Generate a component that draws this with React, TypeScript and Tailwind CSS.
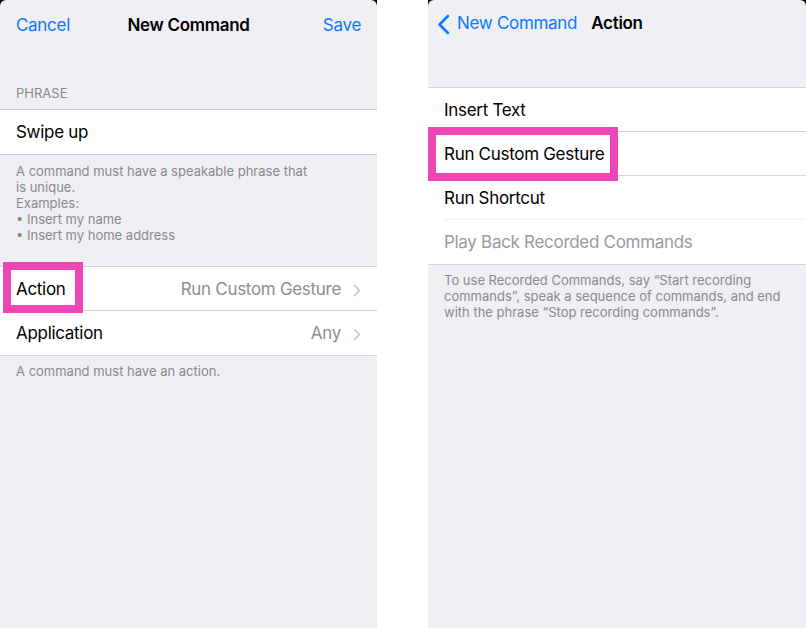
import type { ReactNode } from "react";

const font = { fontFamily: "Inter, 'Noto Sans', sans-serif" };

function Chevron() {
  return (
    <svg width="8" height="13" viewBox="0 0 8 13" className="ml-[12px] shrink-0">
      <path d="M1.5 1.5 L6.5 6.5 L1.5 11.5" fill="none" stroke="#c4c4c8" strokeWidth="1.6" strokeLinecap="round" strokeLinejoin="round" />
    </svg>
  );
}

function BackChevron() {
  return (
    <svg width="13" height="21" viewBox="0 0 13 21" className="shrink-0">
      <path d="M11 2 L2.5 10.5 L11 19" fill="none" stroke="#0a7aff" strokeWidth="2.6" strokeLinecap="round" strokeLinejoin="round" />
    </svg>
  );
}

function Row({
  children,
  value,
  chevron,
  border = "inset",
  muted,
}: {
  children: ReactNode;
  value?: string;
  chevron?: boolean;
  border?: "inset" | "faint" | "none";
  muted?: boolean;
}) {
  return (
    <div className="relative flex h-[44px] items-center bg-white px-4 pt-[2px]">
      <span className={`text-[17px] ${muted ? "text-[#9a9a9e]" : "text-black"}`}>{children}</span>
      <div className="flex-1" />
      {value && <span className="text-[17px] text-[#8e8e93]">{value}</span>}
      {chevron && <Chevron />}
      {border === "inset" && <div className="absolute bottom-0 left-4 right-0 h-px bg-[#d1d1d6]" />}
      {border === "faint" && <div className="absolute bottom-0 left-4 right-0 h-px bg-[#ededf0]" />}
    </div>
  );
}

function Footnote({ children, className = "" }: { children: ReactNode; className?: string }) {
  return <div className={`px-4 text-[13px] leading-[16px] tracking-[0px] text-[#8a8a8e] ${className}`}>{children}</div>;
}

function Panel({ children }: { children: ReactNode }) {
  return (
    <div className="h-full bg-black">
      <div className="h-full rounded-t-[6px] bg-[#efeff4]">{children}</div>
    </div>
  );
}

function NewCommand() {
  return (
    <Panel>
      <div className="relative flex h-[50px] items-center justify-between px-4 pt-[2px] text-[17px]">
        <span className="text-[#0a7aff]">Cancel</span>
        <span className="absolute left-0 right-0 text-center font-semibold text-black">New Command</span>
        <span className="text-[#0a7aff]">Save</span>
      </div>
      <div className="flex h-[59px] items-end px-4 pb-[6px] text-[13px] tracking-[0px] text-[#8a8a8e]">PHRASE</div>
      <div className="border-y border-[#d1d1d6]">
        <Row border="none">Swipe up</Row>
      </div>
      <Footnote className="pb-[23px] pt-[8px]">
        A command must have a speakable phrase that
        <br />
        is unique.
        <br />
        Examples:
        <br />• Insert my name
        <br />• Insert my home address
      </Footnote>
      <div className="border-y border-[#d1d1d6]">
        <Row value="Run Custom Gesture" chevron>
          Action
        </Row>
        <Row value="Any" chevron border="none">
          Application
        </Row>
      </div>
      <Footnote className="pt-[7px]">A command must have an action.</Footnote>
    </Panel>
  );
}

function ActionPicker() {
  return (
    <Panel>
      <div className="relative flex h-[48px] items-center px-[9px] text-[17px]">
        <BackChevron />
        <span className="ml-[7px] text-[#0a7aff]">New Command</span>
        <span className="absolute left-0 right-0 text-center font-semibold text-black">Action</span>
      </div>
      <div className="h-[39px]" />
      <div className="border-y border-[#d1d1d6]">
        <Row>Insert Text</Row>
        <Row>Run Custom Gesture</Row>
        <Row border="faint">Run Shortcut</Row>
        <Row border="none" muted>
          Play Back Recorded Commands
        </Row>
      </div>
      <Footnote className="pt-[7px]">
        To use Recorded Commands, say “Start recording
        <br />
        commands”, speak a sequence of commands, and end
        <br />
        with the phrase “Stop recording commands”.
      </Footnote>
    </Panel>
  );
}

export default function App() {
  return (
    <div className="relative flex h-[628px] w-[806px] overflow-hidden bg-white tracking-[-0.3px]" style={font}>
      <div className="h-full w-[377px] shrink-0">
        <NewCommand />
      </div>
      <div className="h-full w-[51px] shrink-0 bg-white" />
      <div className="h-full flex-1">
        <ActionPicker />
      </div>

      {/* highlight boxes */}
      <div className="absolute left-[3px] top-[262px] h-[51px] w-[80px] border-[8px] border-[#ed46b5]" />
      <div className="absolute left-[428px] top-[127px] h-[54px] w-[190px] border-[8px] border-[#ed46b5]" />
    </div>
  );
}
